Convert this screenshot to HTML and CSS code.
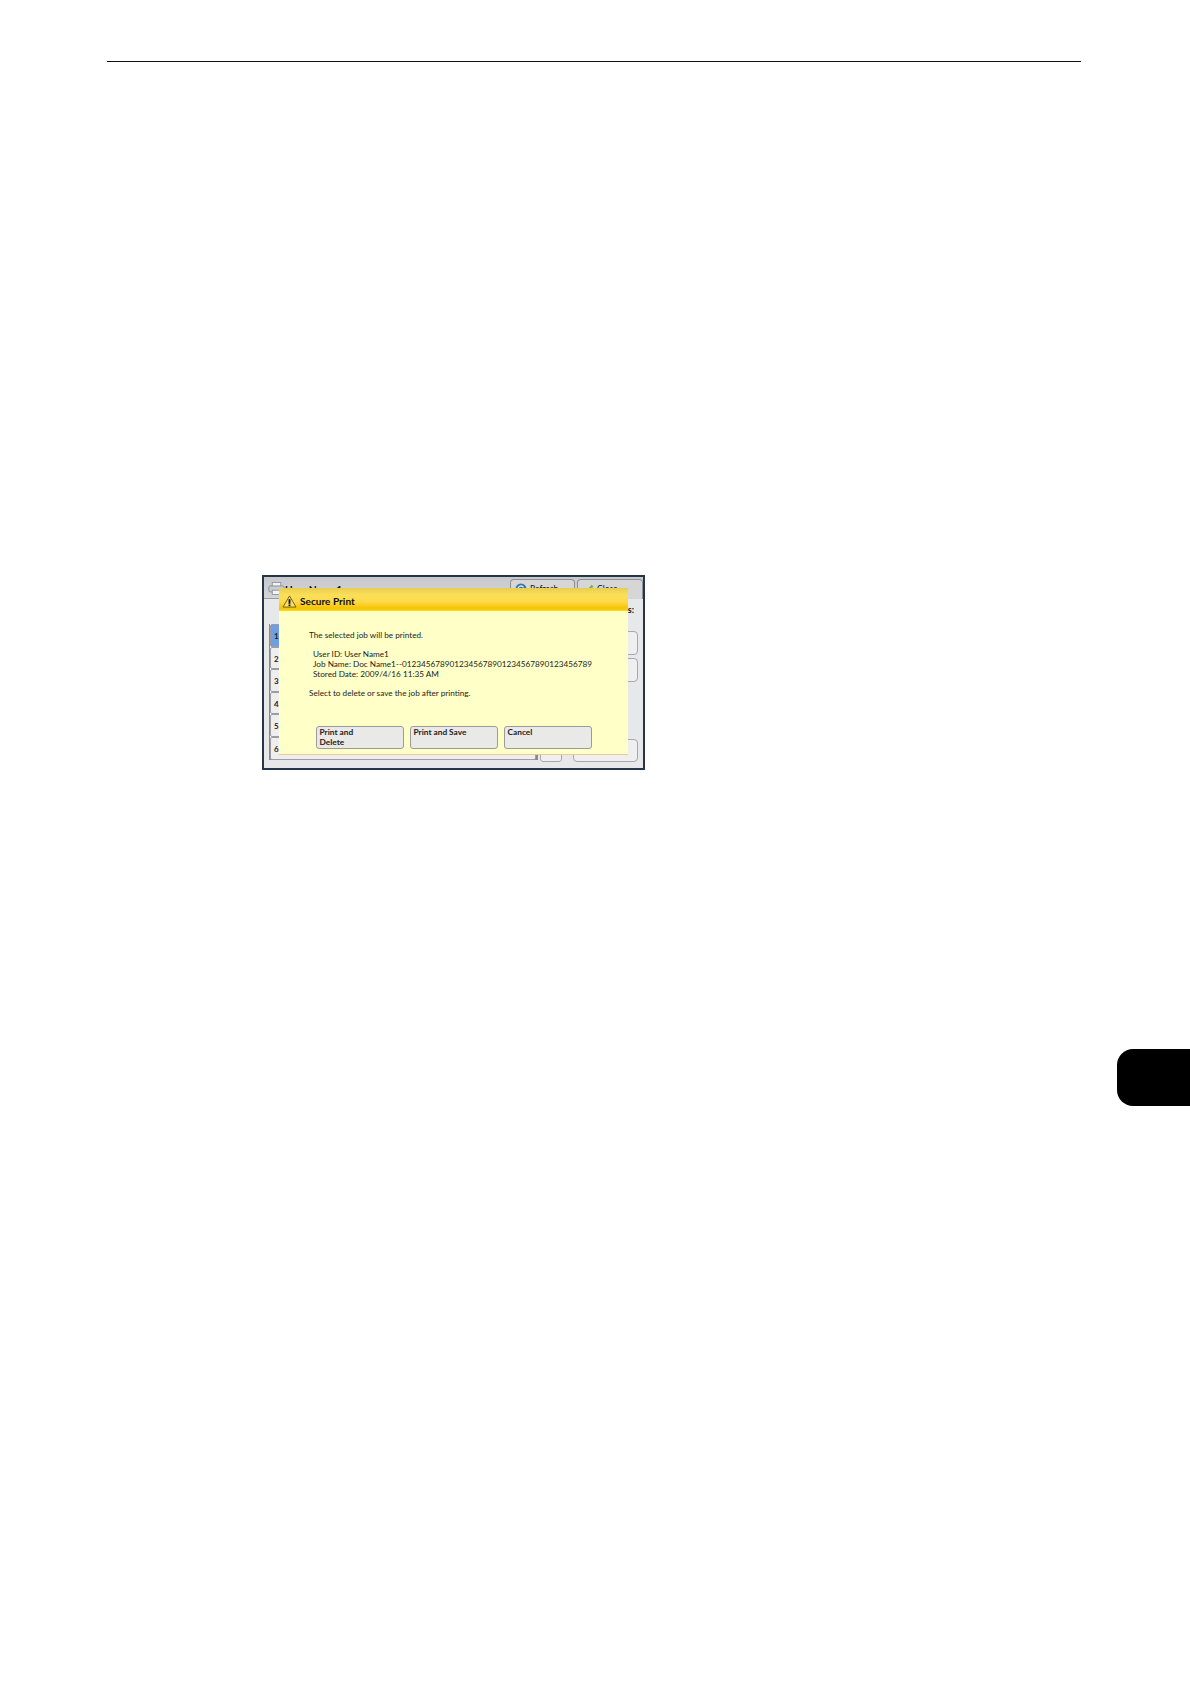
FILE: index.html
```html
<!DOCTYPE html>
<html lang="en">
<head>
<meta charset="utf-8">
<title>Secure Print</title>
<link rel="stylesheet" href="styles.css">
</head>
<body>
<main class="page">
  <header class="running-head"></header>
  <figure class="shot">
    <div class="screen">
      <div class="titlebar">
        <svg class="printer" viewBox="0 0 20 16" aria-hidden="true">
          <rect x="5" y="1" width="10" height="5" fill="#f4f4f4" stroke="#8a9098"/>
          <rect x="1" y="5" width="18" height="7" rx="2" fill="#c9ccd0" stroke="#7f858c"/>
          <rect x="5" y="10" width="10" height="5" fill="#f4f4f4" stroke="#8a9098"/>
        </svg>
        <span class="user">User Name1</span>
        <span class="tbtn refresh">
          <svg class="ico" viewBox="0 0 12 12" aria-hidden="true">
            <circle cx="6" cy="6" r="5.5" fill="#3a74ae"/>
            <path d="M3 6a3 3 0 0 1 5.5-1.6" fill="none" stroke="#dfeaf5" stroke-width="1.3"/>
          </svg>
          Refresh
        </span>
        <span class="tbtn close">
          <svg class="ico" viewBox="0 0 12 12" aria-hidden="true">
            <path d="M1.5 7 4.5 10 10.5 2.5" fill="none" stroke="#79b83a" stroke-width="2.6"/>
          </svg>
          Close
        </span>
      </div>
      <div class="content">
        <ol class="rows">
          <li class="row on">1</li><li class="row">2</li><li class="row">3</li>
          <li class="row">4</li><li class="row">5</li><li class="row">6</li>
        </ol>
        <span class="scroll"></span>
        <div class="side">
          <span class="colon">s:</span>
          <span class="sbtn"></span>
          <span class="sbtn s2"></span>
          <span class="sbtn s3"></span>
        </div>
      </div>
    </div>
    <section class="dialog">
      <h2 class="dlg-head">
        <svg class="warn" viewBox="0 0 16 14" aria-hidden="true">
          <path d="M8 1 15 13H1Z" fill="#f9df6a" stroke="#6e5a10" stroke-width="1"/>
          <rect x="7" y="4.5" width="2" height="5" fill="#111"/>
          <rect x="7" y="10.2" width="2" height="1.8" fill="#111"/>
        </svg>
        Secure Print
      </h2>
      <div class="dlg-body">
        <p class="msg">The selected job will be printed.</p>
        <div class="info">
          <p>User ID: User Name1</p>
          <p>Job Name: Doc Name1--0123456789012345678901234567890123456789</p>
          <p>Stored Date: 2009/4/16 11:35 AM</p>
        </div>
        <p class="msg">Select to delete or save the job after printing.</p>
        <div class="actions">
          <span class="btn">Print and<br>Delete</span>
          <span class="btn">Print and Save</span>
          <span class="btn">Cancel</span>
        </div>
      </div>
    </section>
  </figure>
  <aside class="tab"></aside>
</main>
</body>
</html>
```

FILE: styles.css
```css
* { box-sizing: border-box; }
html, body { margin: 0; background: #fff; }
.page { position: relative; width: 1190px; height: 1684px; overflow: hidden; font-family: "Lato", "Noto Sans", sans-serif; }
.running-head { margin: 61px 109px 0 107px; border-top: 1px solid #111; height: 1px; }
.shot { position: relative; margin: 513px 0 0 262px; width: 383px; height: 195px; }
.screen { width: 100%; height: 100%; border: 2px solid #25364a; background: #e6e8ea; display: flex; flex-direction: column; overflow: hidden; }
.titlebar { height: 22px; flex: none; display: flex; align-items: flex-start; background: linear-gradient(#c6c8cb, #d4d5d7); border-bottom: 1px solid #9a9ea3; padding: 2px 0 0 4px; }
.printer { width: 17px; height: 15px; margin-top: 2px; }
.user { margin: 5px 0 0 0; font: 700 10.4px/13px "Lato", sans-serif; color: #111; flex: 1; }
.tbtn { height: 20px; border: 1px solid #8d9196; border-bottom: 0; border-radius: 4px 4px 0 0; background: #d6d6d7; font-size: 8.5px; line-height: 13px; padding: 3px 0 0 4px; display: flex; gap: 3px; color: #111; }
.refresh { width: 65px; margin-right: 2px; }
.close { width: 66px; }
.ico { width: 12px; height: 12px; }
.content { flex: 1; min-height: 0; display: flex; padding: 25px 4px 6px 5px; }
.rows { list-style: none; margin: 0; padding: 0; width: 269px; height: 136px; border-right: 2px solid #868a8f; border-bottom: 2px solid #868a8f; border-left: 1px solid #868a8f; background: #fff; }
.row { height: 22.6px; border: 1px solid #9a9ea3; border-radius: 2px; background: #eee; font: 700 8px/22px "Lato", sans-serif; padding-left: 3px; color: #222; }
.row.on { background: #6f9fe0; }
.scroll { align-self: flex-end; width: 22px; height: 23px; margin-left: 2px; border: 1px solid #a5a8ac; border-radius: 0 0 3px 3px; background: #efefef; }
.side { width: 65px; margin-left: 11px; display: flex; flex-direction: column; position: relative; padding-top: 7px; }
.colon { position: absolute; right: 4px; top: -19px; font: 700 9px/10px "Lato", sans-serif; color: #111; }
.sbtn { height: 24px; border: 1px solid #a5a8ac; border-radius: 4px; background: #efefef; margin-bottom: 3px; }
.sbtn.s2 { margin-bottom: 57px; }
.sbtn.s3 { height: 23px; margin-bottom: 0; }
.dialog { position: absolute; left: 17px; top: 13px; width: 349px; height: 166px; background: #ffffc8; box-shadow: 0 1px 0 #eec898; display: flex; flex-direction: column; }
.dlg-head { margin: 0; height: 23px; flex: none; display: flex; align-items: center; gap: 3px; padding: 3px 0 0 3px; background: linear-gradient(#e8cc50, #fbdf58 30%, #fdd94a 60%, #f5c400 88%, #f9d820); font: 700 10.1px/12px "Lato", sans-serif; color: #111; }
.warn { width: 15px; height: 13px; }
.dlg-body { flex: 1; display: flex; flex-direction: column; padding: 19px 0 0 30px; font-size: 8.2px; line-height: 10px; color: #1c1c1c; }
.msg { margin: 0; }
.info { margin: 9px 0 9px 4px; }
.info p { margin: 0; }
.actions { display: flex; gap: 6px; margin: 28px 0 0 7px; }
.btn { width: 88px; height: 23px; border: 1px solid #9b9b9b; border-radius: 3px; background: #e9e9e7; padding: 1px 0 0 2.5px; font: 700 8.3px/9.6px "Lato", sans-serif; color: #222; }
.tab { position: absolute; left: 1117px; top: 1049px; width: 73px; height: 57px; background: #000; border-radius: 16px 0 0 16px; }
```
